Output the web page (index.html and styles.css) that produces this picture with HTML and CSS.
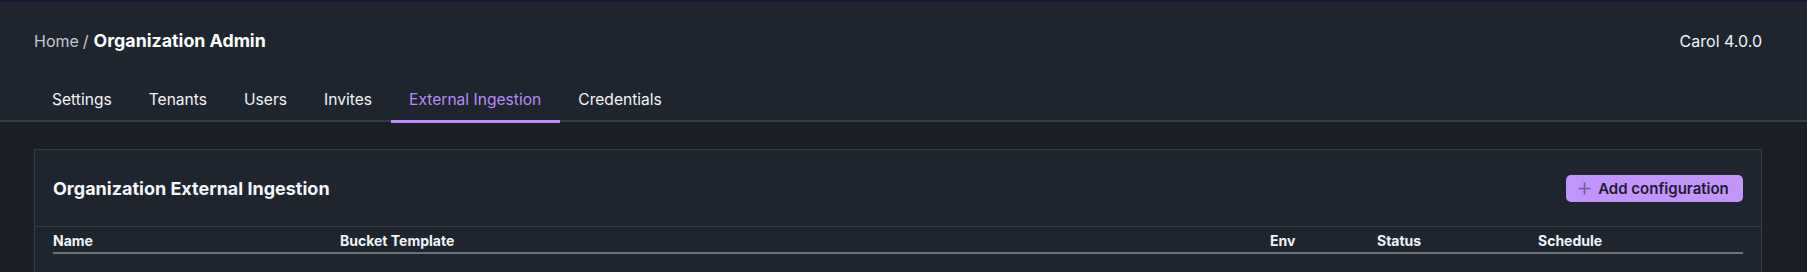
FILE: index.html
```html
<!DOCTYPE html>
<html lang="en">
<head>
<meta charset="utf-8">
<title>Organization Admin</title>
<link rel="stylesheet" href="styles.css">
</head>
<body>
<header class="header">
  <div class="header-top">
    <div class="breadcrumb"><span class="crumb-home">Home</span><span class="crumb-sep">/</span><span class="crumb-current">Organization Admin</span></div>
    <div class="version">Carol 4.0.0</div>
  </div>
  <nav class="tabs">
    <a class="tab">Settings</a>
    <a class="tab">Tenants</a>
    <a class="tab">Users</a>
    <a class="tab">Invites</a>
    <a class="tab active">External Ingestion</a>
    <a class="tab">Credentials</a>
  </nav>
</header>
<main class="content">
  <section class="card">
    <div class="card-header">
      <h2 class="card-title">Organization External Ingestion</h2>
      <button class="btn-add"><svg class="plus" width="13" height="13" viewBox="0 0 13 13"><path d="M6.5 0.5v12M0.5 6.5h12" stroke="currentColor" stroke-width="1.6" fill="none"/></svg><span>Add configuration</span></button>
    </div>
    <div class="table">
      <div class="thead">
        <div class="th">Name</div>
        <div class="th">Bucket Template</div>
        <div class="th">Env</div>
        <div class="th">Status</div>
        <div class="th">Schedule</div>
      </div>
    </div>
  </section>
</main>
</body>
</html>
```
FILE: styles.css
```css
* { box-sizing: border-box; }
html, body { margin: 0; padding: 0; }
body {
  background: #1b2027;
  font-family: Inter, "Noto Sans", sans-serif;
  color: #f1f4f8;
  border-top: 2px solid #1c1430;
  min-height: 100vh;
}
.header {
  background: #1f252e;
}
.header-top {
  display: flex;
  justify-content: space-between;
  align-items: center;
  padding: 0 45px 0 34px;
  height: 78px;
}
.breadcrumb {
  display: flex;
  align-items: baseline;
  gap: 4px;
  font-size: 16px;
  line-height: 24px;
}
.crumb-home, .crumb-sep { color: #c3c9d1; }
.crumb-current { font-weight: 700; color: #ffffff; font-size: 17.8px; margin-left: 1px; }
.version {
  font-size: 16px;
  color: #f1f4f8;
}
.tabs {
  display: flex;
  padding: 0 0 0 33.5px;
  border-bottom: 2px solid #363d48;
  height: 42px;
}
.tab {
  display: flex;
  align-items: center;
  padding: 0 18.5px 4px;
  font-size: 15.6px;
  color: #f1f4f8;
  height: 42px;
}
.tab.active {
  color: #b68bf8;
  border-bottom: 3px solid #bb8cfc;
  padding-bottom: 1px;
  height: 43px;
}
.content {
  padding: 27px 45px 0 34px;
}
.card {
  background: #1f252e;
  border: 1px solid #363d48;
  border-bottom: none;
  min-height: 130px;
}
.card-header {
  display: flex;
  justify-content: space-between;
  align-items: center;
  padding: 0 18px;
  height: 77px;
  border-bottom: 1px solid #363d48;
}
.card-title {
  margin: 0;
  font-size: 18px;
  font-weight: 700;
  color: #f4f6f9;
}
.btn-add {
  display: flex;
  align-items: center;
  justify-content: center;
  gap: 7px;
  height: 27px;
  width: 177px;
  padding: 0 6px 0 4px;
  border: none;
  border-radius: 5px;
  background: #c294fc;
  color: #1d1a30;
  font-family: Inter, "Noto Sans", sans-serif;
  font-size: 15px;
  font-weight: 600;
  white-space: nowrap;
  margin-top: 1px;
}
.btn-add .plus { color: #6e5d8f; flex: none; }
.table {
  padding: 0 18px;
}
.thead {
  display: grid;
  grid-template-columns: 287px 930px 107px 161px 1fr;
  height: 27px;
  align-items: center;
  border-bottom: 2px solid #6b717b;
}
.th {
  font-size: 14px;
  font-weight: 700;
  color: #f1f4f8;
  padding-top: 1px;
}
```
